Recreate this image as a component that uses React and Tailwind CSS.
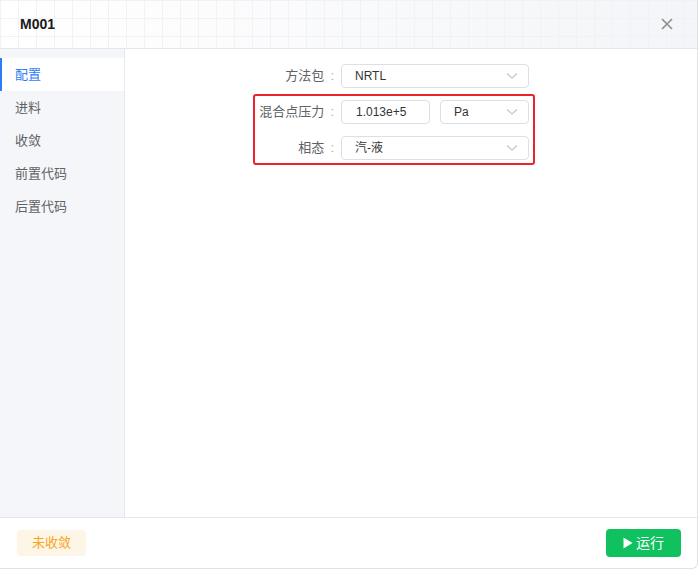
import React from "react";

const Chevron = () => (
  <svg width="12" height="8" viewBox="0 0 12 8" className="shrink-0">
    <path d="M1 1.5 L6 6 L11 1.5" fill="none" stroke="#c0c4cc" strokeWidth="1.1" />
  </svg>
);

const Select = ({ value, w }) => (
  <div className={`${w} shrink-0 h-6 flex items-center justify-between border border-[#dcdfe6] rounded-[4px] pl-[13px] pr-[10px] text-[12px] text-[#333]`}>
    <span>{value}</span>
    <Chevron />
  </div>
);

const Label = ({ children }) => (
  <div className="w-[82px] shrink-0 pr-[3px] text-right text-[13px] text-[#606266] whitespace-nowrap">
    {children}
    <span className="text-[#aaa] ml-[6px]">:</span>
  </div>
);

export default function App() {
  const items = ["配置", "进料", "收敛", "前置代码", "后置代码"];
  return (
    <div
      className="w-[699px] h-[570px] bg-white"
      style={{ fontFamily: '"Liberation Sans", "Noto Sans CJK SC", sans-serif' }}
    >
      <div className="w-[698px] h-[569px] flex flex-col border-r border-b border-[#e2e2e2] rounded-br-[6px] overflow-hidden">
        <div className="h-[49px] shrink-0 flex items-center justify-between pl-[20px] pr-[24px] border-b border-[#e6e7ea] bg-[linear-gradient(#f1f2f5_1px,transparent_1px),linear-gradient(90deg,#f1f2f5_1px,transparent_1px),linear-gradient(90deg,#ffffff,#f4f5f8)] bg-size-[18px_18px,18px_18px,100%_100%]">
          <span className="text-[14px] font-bold text-[#1a1a1a]">M001</span>
          <svg width="12" height="12" viewBox="0 0 12 12">
            <path d="M1 1 L11 11 M11 1 L1 11" stroke="#909090" strokeWidth="1.7" />
          </svg>
        </div>
        <div className="flex flex-1 min-h-0">
          <div className="w-[125px] shrink-0 bg-[#f5f6f9] border-r border-[#e6e7ea] pt-[9px]">
            {items.map((it, i) => (
              <div
                key={it}
                className={
                  i === 0
                    ? "h-[33px] flex items-center pl-[13px] bg-white border-l-2 border-[#2f7cf6] text-[13px] text-[#2f7cf6]"
                    : "h-[33px] flex items-center pl-[15px] text-[13px] text-[#606266]"
                }
              >
                {it}
              </div>
            ))}
          </div>
          <div className="flex-1 pt-[15px] pl-[130px]">
            <div className="flex items-center gap-[4px]">
              <Label>方法包</Label>
              <Select value="NRTL" w="w-[188px]" />
            </div>
            <div className="mt-[6px] -ml-[2px] w-[282px] border-2 border-[#e8262a] rounded-[3px] pt-[4px] pb-[3px] pr-[4px] flex flex-col gap-[12px]">
              <div className="flex items-center gap-[4px]">
                <Label>混合点压力</Label>
                <div className="w-[89px] shrink-0 h-6 flex items-center border border-[#dcdfe6] rounded-[4px] pl-[14px] text-[12px] text-[#333]">
                  1.013e+5
                </div>
                <div className="ml-[6px] shrink-0">
                  <Select value="Pa" w="w-[89px]" />
                </div>
              </div>
              <div className="flex items-center gap-[4px]">
                <Label>相态</Label>
                <Select value="汽-液" w="w-[188px]" />
              </div>
            </div>
          </div>
        </div>
        <div className="h-[51px] shrink-0 border-t border-[#e6e7ea] flex items-center justify-between pl-[17px] pr-[16px]">
          <div className="w-[69px] h-[26px] rounded-[4px] bg-[#fdf5e6] text-[#f5a623] text-[13px] flex items-center justify-center">
            未收敛
          </div>
          <div className="w-[75px] h-[28px] rounded-[4px] bg-[#10c160] text-white text-[14px] flex items-center justify-center gap-[3px]">
            <svg width="10" height="12" viewBox="0 0 10 12">
              <path d="M0.5 0.5 L9.5 6 L0.5 11.5 Z" fill="white" />
            </svg>
            <span>运行</span>
          </div>
        </div>
      </div>
    </div>
  );
}
